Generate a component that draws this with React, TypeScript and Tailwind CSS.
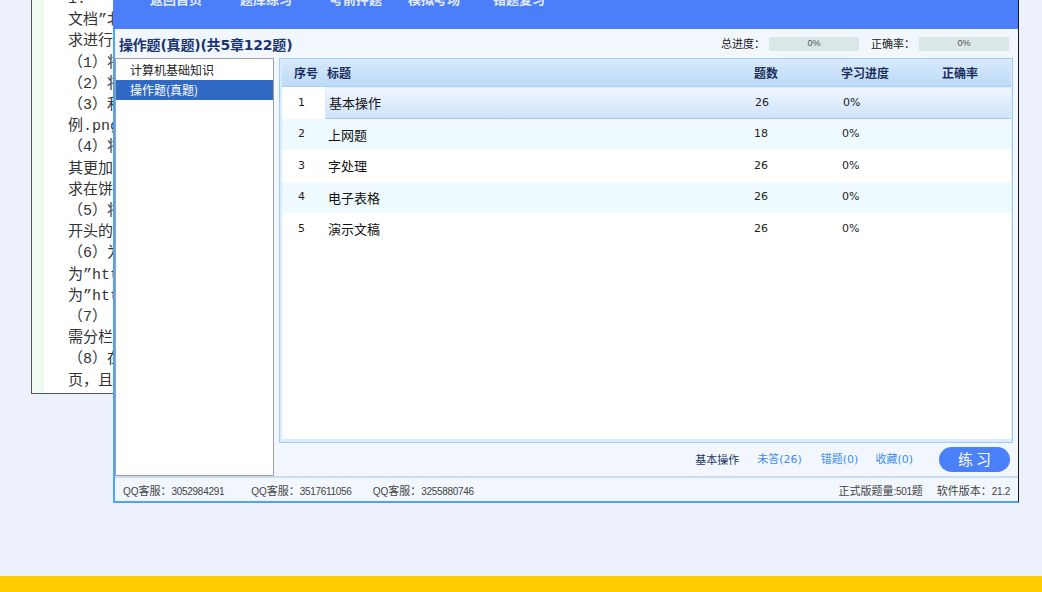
import React from "react";

const docLines = [
  "1.",
  "文档”北京市政府工作报告.docx”，按照要",
  "求进行排版操作：",
  "（1）将文档中的标题设置为标题样式。",
  "（2）将正文部分的段落设置为首行缩进。",
  "（3）利用文档中的表格数据制作图表，参考样",
  "例.png文件中的样式插入图表。",
  "（4）将图表的样式进行适当的调整，使",
  "其更加美观，图表的标题设置为居中，要",
  "求在饼图中显示百分比数据。",
  "（5）将文档中所有以数字编号",
  "开头的段落设置为项目编号列表。",
  "（6）为文档中的文字添加超链接，链接地址",
  "为”http://www.beijing.gov.cn”，另外",
  "为”http://www.gov.cn”。",
  "（7） .将文档中的最后两段内容分为两栏，",
  "需分栏显示并添加分隔线。",
  "（8）在文档的页脚处插入页码，页码从第1",
  "页，且居中显示。",
];

const rows = [
  { no: "1", title: "基本操作", count: "26" },
  { no: "2", title: "上网题", count: "18" },
  { no: "3", title: "字处理", count: "26" },
  { no: "4", title: "电子表格", count: "26" },
  { no: "5", title: "演示文稿", count: "26" },
];

const num = "font-['Liberation_Sans',sans-serif] text-[10px] tracking-[-0.3px]";

export default function App() {
  return (
    <div className="relative w-[1042px] h-[592px] overflow-hidden bg-[#edf1fb] flex flex-col font-['Noto_Sans_CJK_SC',sans-serif]">
      <div className="flex-1" />
      <div className="h-[16px] bg-[#ffcc00]" />

      {/* background document window (its right part lies under the app window) */}
      <div className="absolute left-[31px] top-[-12px] w-[84px] h-[406px] border border-[#555] bg-white flex overflow-hidden">
        <div className="w-[12px] shrink-0 bg-[#effbef]" />
        <div className="pl-[24px] text-[15px] leading-[21.2px] text-[#333] whitespace-nowrap font-['Liberation_Mono','Noto_Sans_CJK_SC',monospace]">
          {docLines.map((l, i) => (
            <div key={i}>{l}</div>
          ))}
        </div>
      </div>

      {/* app window */}
      <div className="absolute left-[113px] top-0 w-[906px] h-[503px] flex flex-col">
        {/* nav */}
        <div className="h-[29px] shrink-0 bg-[#4a7ff9] border-r border-[#1a1a1a] overflow-hidden">
          <div className="flex text-[13px] font-bold leading-[16px] text-[#e4ebff] -mt-[9px]">
            <span className="ml-[37px]">返回首页</span>
            <span className="ml-[38px]">题库练习</span>
            <span className="ml-[38px]">考前押题</span>
            <span className="ml-[26px]">模拟考场</span>
            <span className="ml-[33px]">错题复习</span>
          </div>
        </div>

        {/* body */}
        <div className="flex-1 flex flex-col bg-[#f1f7fd] border-l-2 border-l-[#4da3fb] border-r border-r-[#1a1a1a] border-b-2 border-b-[#4da3fb]">
          {/* title row */}
          <div className="h-[29px] shrink-0 flex items-center justify-between pl-[4px] pr-[9px]">
            <div className="mt-[3px] text-[14px] font-bold text-[#1b3670] font-['DejaVu_Sans','Noto_Sans_CJK_SC',sans-serif] tracking-[-0.2px]">
              操作题(真题)(共5章122题)
            </div>
            <div className="flex items-center text-[11px] text-[#222]">
              <span>总进度：</span>
              <div className="ml-[4px] w-[90px] h-[14px] bg-[#d9e7e7] flex items-center justify-center text-[9px] text-[#555] font-['Liberation_Sans',sans-serif]">
                0%
              </div>
              <span className="ml-[12px]">正确率：</span>
              <div className="ml-[4px] w-[90px] h-[14px] bg-[#d9e7e7] flex items-center justify-center text-[9px] text-[#555] font-['Liberation_Sans',sans-serif]">
                0%
              </div>
            </div>
          </div>

          {/* main */}
          <div className="h-[418px] shrink-0 flex pr-[5px]">
            {/* tree */}
            <div className="w-[159px] shrink-0 border border-[#a0a0a0] bg-white text-[12px]">
              <div className="h-[21px] flex items-center pl-[14px] text-[#222]">计算机基础知识</div>
              <div className="h-[20px] flex items-center pl-[14px] bg-[#316ac5] text-white">操作题(真题)</div>
            </div>

            {/* right */}
            <div className="flex-1 ml-[5px] flex flex-col">
              <div className="h-[385px] shrink-0 border border-[#a3cbf3] bg-white flex flex-col">
                <div className="flex-1 flex flex-col border-l-2 border-r border-b-[3px] border-[#d9ebfd]">
                  {/* header */}
                  <div className="h-[28px] shrink-0 grid grid-cols-[43px_426px_87px_101px_1fr] items-center text-[12px] font-bold text-[#1c2f5c] bg-gradient-to-b from-[#d9eafc] to-[#bcdaf7] border-b border-[#a9d0f6]">
                    <span className="pl-[12px]">序号</span>
                    <span className="pl-[2px]">标题</span>
                    <span className="pl-[3px]">题数</span>
                    <span className="pl-[3px]">学习进度</span>
                    <span className="pl-[3px]">正确率</span>
                  </div>
                  {rows.map((r, i) => {
                    const sel = i === 0;
                    const alt = i % 2 === 1;
                    return (
                      <div
                        key={r.no}
                        className={`h-[31.5px] shrink-0 grid grid-cols-[43px_1fr] ${alt ? "bg-[#effaff]" : "bg-white"}`}
                      >
                        <span className="flex items-center pl-[16px] text-[11px] text-[#2a1a1a] font-['DejaVu_Sans',sans-serif]">
                          {r.no}
                        </span>
                        <div
                          className={`grid grid-cols-[426px_87px_101px_1fr] items-center ${
                            sel
                              ? "bg-gradient-to-b from-[#f1f7ff] to-[#cfe3fa] border-t border-t-[#e2eefc] border-b border-b-[#a5caf0] border-l border-l-[#dfeafa]"
                              : ""
                          }`}
                        >
                          <span className="pl-[3px] text-[13px] text-[#111]">{r.title}</span>
                          <span className="pl-[3px] text-[11px] text-[#222] font-['DejaVu_Sans',sans-serif]">{r.count}</span>
                          <span className="pl-[4px] text-[11px] text-[#222] font-['DejaVu_Sans',sans-serif]">0%</span>
                          <span />
                        </div>
                      </div>
                    );
                  })}
                </div>
              </div>

              {/* actions */}
              <div className="flex-1 flex items-center justify-end pr-[3px] text-[11px]">
                <span className="text-[#1d3566]">基本操作</span>
                <span className="ml-[18px] text-[#3b8bf2]">
                  未答<span className="font-['DejaVu_Sans',sans-serif] text-[11px]">(26)</span>
                </span>
                <span className="ml-[19px] text-[#3b8bf2]">
                  错题<span className="font-['DejaVu_Sans',sans-serif] text-[11px]">(0)</span>
                </span>
                <span className="ml-[17px] text-[#3b8bf2]">
                  收藏<span className="font-['DejaVu_Sans',sans-serif] text-[11px]">(0)</span>
                </span>
                <button className="ml-[26px] w-[71px] h-[25px] rounded-full bg-[#4a80fa] text-white text-[15px] tracking-[3px] pl-[3px] flex items-center justify-center">
                  练习
                </button>
              </div>
            </div>
          </div>

          {/* status bar */}
          <div className="flex-1 border-t-2 border-[#c8def4] flex items-center pt-[2px] px-[8px] text-[11px] text-[#444] font-['Noto_Sans_CJK_SC',sans-serif]">
            <span>
              <span className="font-['Liberation_Sans',sans-serif] text-[10px]">QQ</span>客服：<span className={num}>3052984291</span>
            </span>
            <span className="ml-[27px]">
              <span className="font-['Liberation_Sans',sans-serif] text-[10px]">QQ</span>客服：<span className={num}>3517611056</span>
            </span>
            <span className="ml-[21px]">
              <span className="font-['Liberation_Sans',sans-serif] text-[10px]">QQ</span>客服：<span className={num}>3255880746</span>
            </span>
            <span className="ml-auto">
              正式版题量<span className={num}>:501</span>题
            </span>
            <span className="ml-[14px]">
              软件版本：<span className={num}>21.2</span>
            </span>
          </div>
        </div>
      </div>
    </div>
  );
}
